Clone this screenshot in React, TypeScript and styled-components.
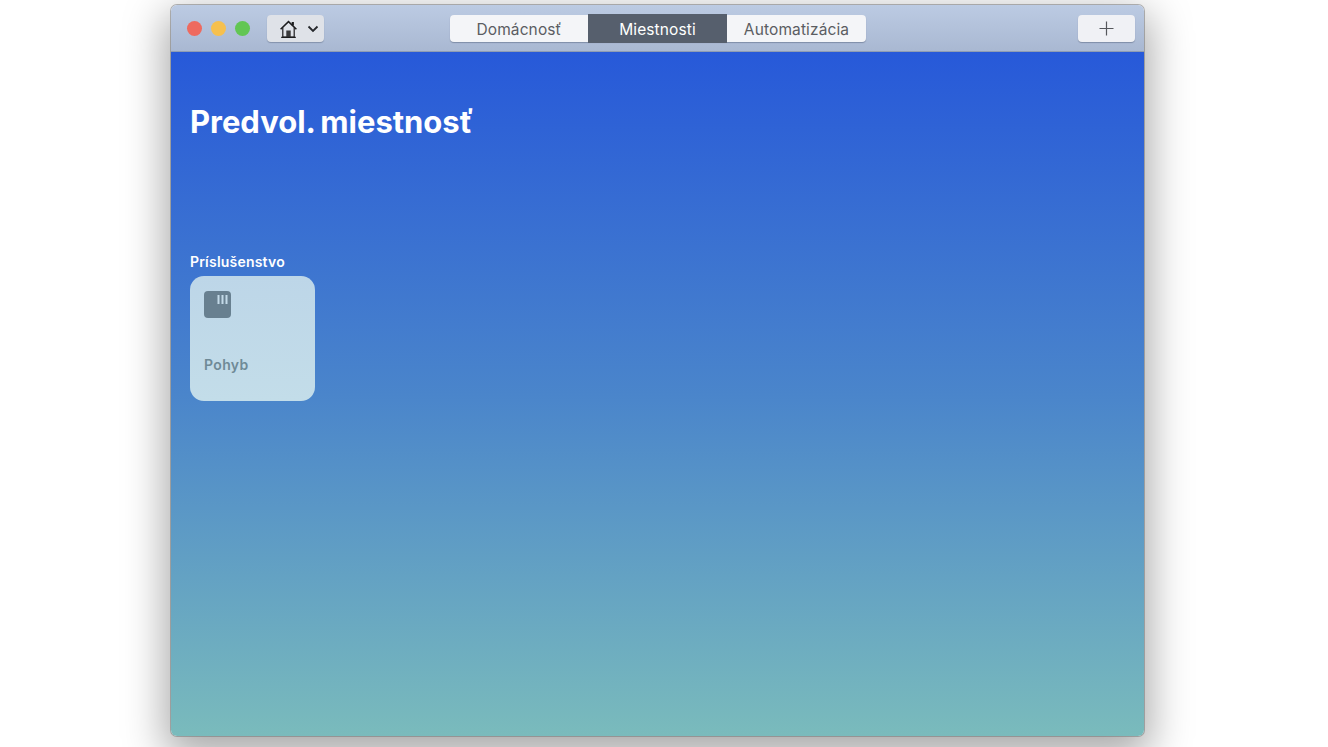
import React from "react";
import styled, { createGlobalStyle } from "styled-components";

const GlobalStyle = createGlobalStyle`
  html, body {
    margin: 0;
    height: 100%;
    background: #fff;
    overflow: hidden;
    font-family: Inter, "Liberation Sans", sans-serif;
    -webkit-font-smoothing: antialiased;
  }
`;

const Page = styled.div`
  width: 1328px;
  height: 747px;
  box-sizing: border-box;
  padding: 5px 0 0 171px;
  overflow: hidden;
`;

const Window = styled.div`
  width: 973px;
  height: 731px;
  border-radius: 6px;
  overflow: hidden;
  display: flex;
  flex-direction: column;
  box-shadow: 0 0 0 1px rgba(120, 120, 120, 0.55), 0 14px 42px 6px rgba(0, 0, 0, 0.34);
`;

const TitleBar = styled.header`
  height: 47px;
  flex: none;
  box-sizing: border-box;
  padding: 10px 9px 0;
  display: grid;
  grid-template-columns: 1fr auto 1fr;
  align-items: start;
  background: linear-gradient(#bccbe3, #a9b8d2);
  border-bottom: 1px solid #8f9db3;
`;

const LeftGroup = styled.div`
  display: flex;
  align-items: center;
`;

const Lights = styled.div`
  display: flex;
  gap: 9px;
  margin: 0 17px 0 7px;
`;

const Light = styled.span<{ $color: string }>`
  width: 15px;
  height: 15px;
  border-radius: 50%;
  background: ${(p) => p.$color};
`;

const HomeButton = styled.button`
  width: 57px;
  height: 27px;
  padding: 0 5px 0 13px;
  border: 0;
  border-radius: 4px;
  display: flex;
  align-items: center;
  justify-content: space-between;
  background: #dfe2e8;
  box-shadow: 0 1px 1px rgba(70, 85, 110, 0.4);
`;

const Tabs = styled.nav`
  display: flex;
  height: 27px;
  border-radius: 4px;
  background: #f4f5f8;
  box-shadow: 0 1px 1px rgba(70, 85, 110, 0.45);
`;

const Tab = styled.div<{ $active?: boolean; $width: number }>`
  width: ${(p) => p.$width}px;
  height: ${(p) => (p.$active ? 29 : 27)}px;
  margin-top: ${(p) => (p.$active ? -1 : 0)}px;
  box-sizing: border-box;
  padding: 1px 0 0 1px;
  display: flex;
  align-items: center;
  justify-content: center;
  font-size: 15.5px;
  letter-spacing: 0.12px;
  color: ${(p) => (p.$active ? "#ffffff" : "#5b5d62")};
  background: ${(p) => (p.$active ? "#565f6d" : "transparent")};
`;

const RightGroup = styled.div`
  display: flex;
  justify-content: flex-end;
`;

const AddButton = styled.button`
  width: 57px;
  height: 27px;
  padding: 0;
  border: 0;
  border-radius: 4px;
  display: flex;
  align-items: center;
  justify-content: center;
  background: #f0f1f5;
  box-shadow: 0 1px 1px rgba(70, 85, 110, 0.45);
`;

const Content = styled.main`
  flex: 1;
  box-sizing: border-box;
  padding: 52px 19px 0;
  background: linear-gradient(#2759d9 0%, #4a85cb 50%, #7abbbc 100%);
`;

const Title = styled.h1`
  margin: 0;
  height: 36px;
  font-size: 31px;
  line-height: 36px;
  font-weight: 700;
  letter-spacing: -0.02px;
  word-spacing: -2px;
  color: #fff;
`;

const SectionLabel = styled.h2`
  margin: 112px 0 0;
  height: 20px;
  font-size: 14px;
  line-height: 20px;
  font-weight: 600;
  letter-spacing: 0.2px;
  color: #fff;
`;

const Tile = styled.div`
  width: 125px;
  height: 125px;
  margin-top: 4px;
  box-sizing: border-box;
  padding: 15px 14px;
  border-radius: 14px;
  display: flex;
  flex-direction: column;
  justify-content: space-between;
  background: linear-gradient(#bdd6e8, #c3dde9);
`;

const TileIcon = styled.svg`
  display: block;
`;

const TileName = styled.span`
  margin-bottom: 13px;
  font-size: 14px;
  line-height: 17px;
  font-weight: 600;
  letter-spacing: 0.35px;
  color: #6f8a97;
`;

export default function App() {
  return (
    <Page>
      <GlobalStyle />
      <Window>
        <TitleBar>
          <LeftGroup>
            <Lights>
              <Light $color="#ee6a5f" />
              <Light $color="#f6c04e" />
              <Light $color="#62c654" />
            </Lights>
            <HomeButton>
              <svg width="17" height="18" viewBox="0 0 17 18" fill="none" stroke="#1c1c1e" strokeWidth="1.2">
                <path d="M.6 9.2 8.5 1.6l7.9 7.6" strokeWidth="1.5" />
                <path d="M2.8 7.6v9.6h11.4V7.6" />
                <path d="M12.8 2v3.6" strokeWidth="2.2" />
                <rect x="6.3" y="10.5" width="4.4" height="6.5" fill="#3a3a3c" stroke="none" />
                <path d="M1.2 17.4h14.6" />
              </svg>
              <svg width="12" height="8" viewBox="0 0 12 8" fill="none" stroke="#26282c" strokeWidth="1.8">
                <path d="M1.5 1.5 6 6l4.5-4.5" />
              </svg>
            </HomeButton>
          </LeftGroup>
          <Tabs>
            <Tab $width={138}>Domácnosť</Tab>
            <Tab $width={139} $active>Miestnosti</Tab>
            <Tab $width={139}>Automatizácia</Tab>
          </Tabs>
          <RightGroup>
            <AddButton>
              <svg width="15" height="15" viewBox="0 0 15 15" stroke="#55575c" strokeWidth="1.2">
                <path d="M7.5 0.5v14M0.5 7.5h14" />
              </svg>
            </AddButton>
          </RightGroup>
        </TitleBar>
        <Content>
          <Title>Predvol. miestnosť</Title>
          <SectionLabel>Príslušenstvo</SectionLabel>
          <Tile>
            <TileIcon width="27" height="27" viewBox="0 0 27 27">
              <rect width="27" height="27" rx="4" fill="#688090" />
              <path d="M14.5 4v9M18.5 4v9M22.5 4v9" stroke="#c3dae8" strokeWidth="2" />
            </TileIcon>
            <TileName>Pohyb</TileName>
          </Tile>
        </Content>
      </Window>
    </Page>
  );
}
